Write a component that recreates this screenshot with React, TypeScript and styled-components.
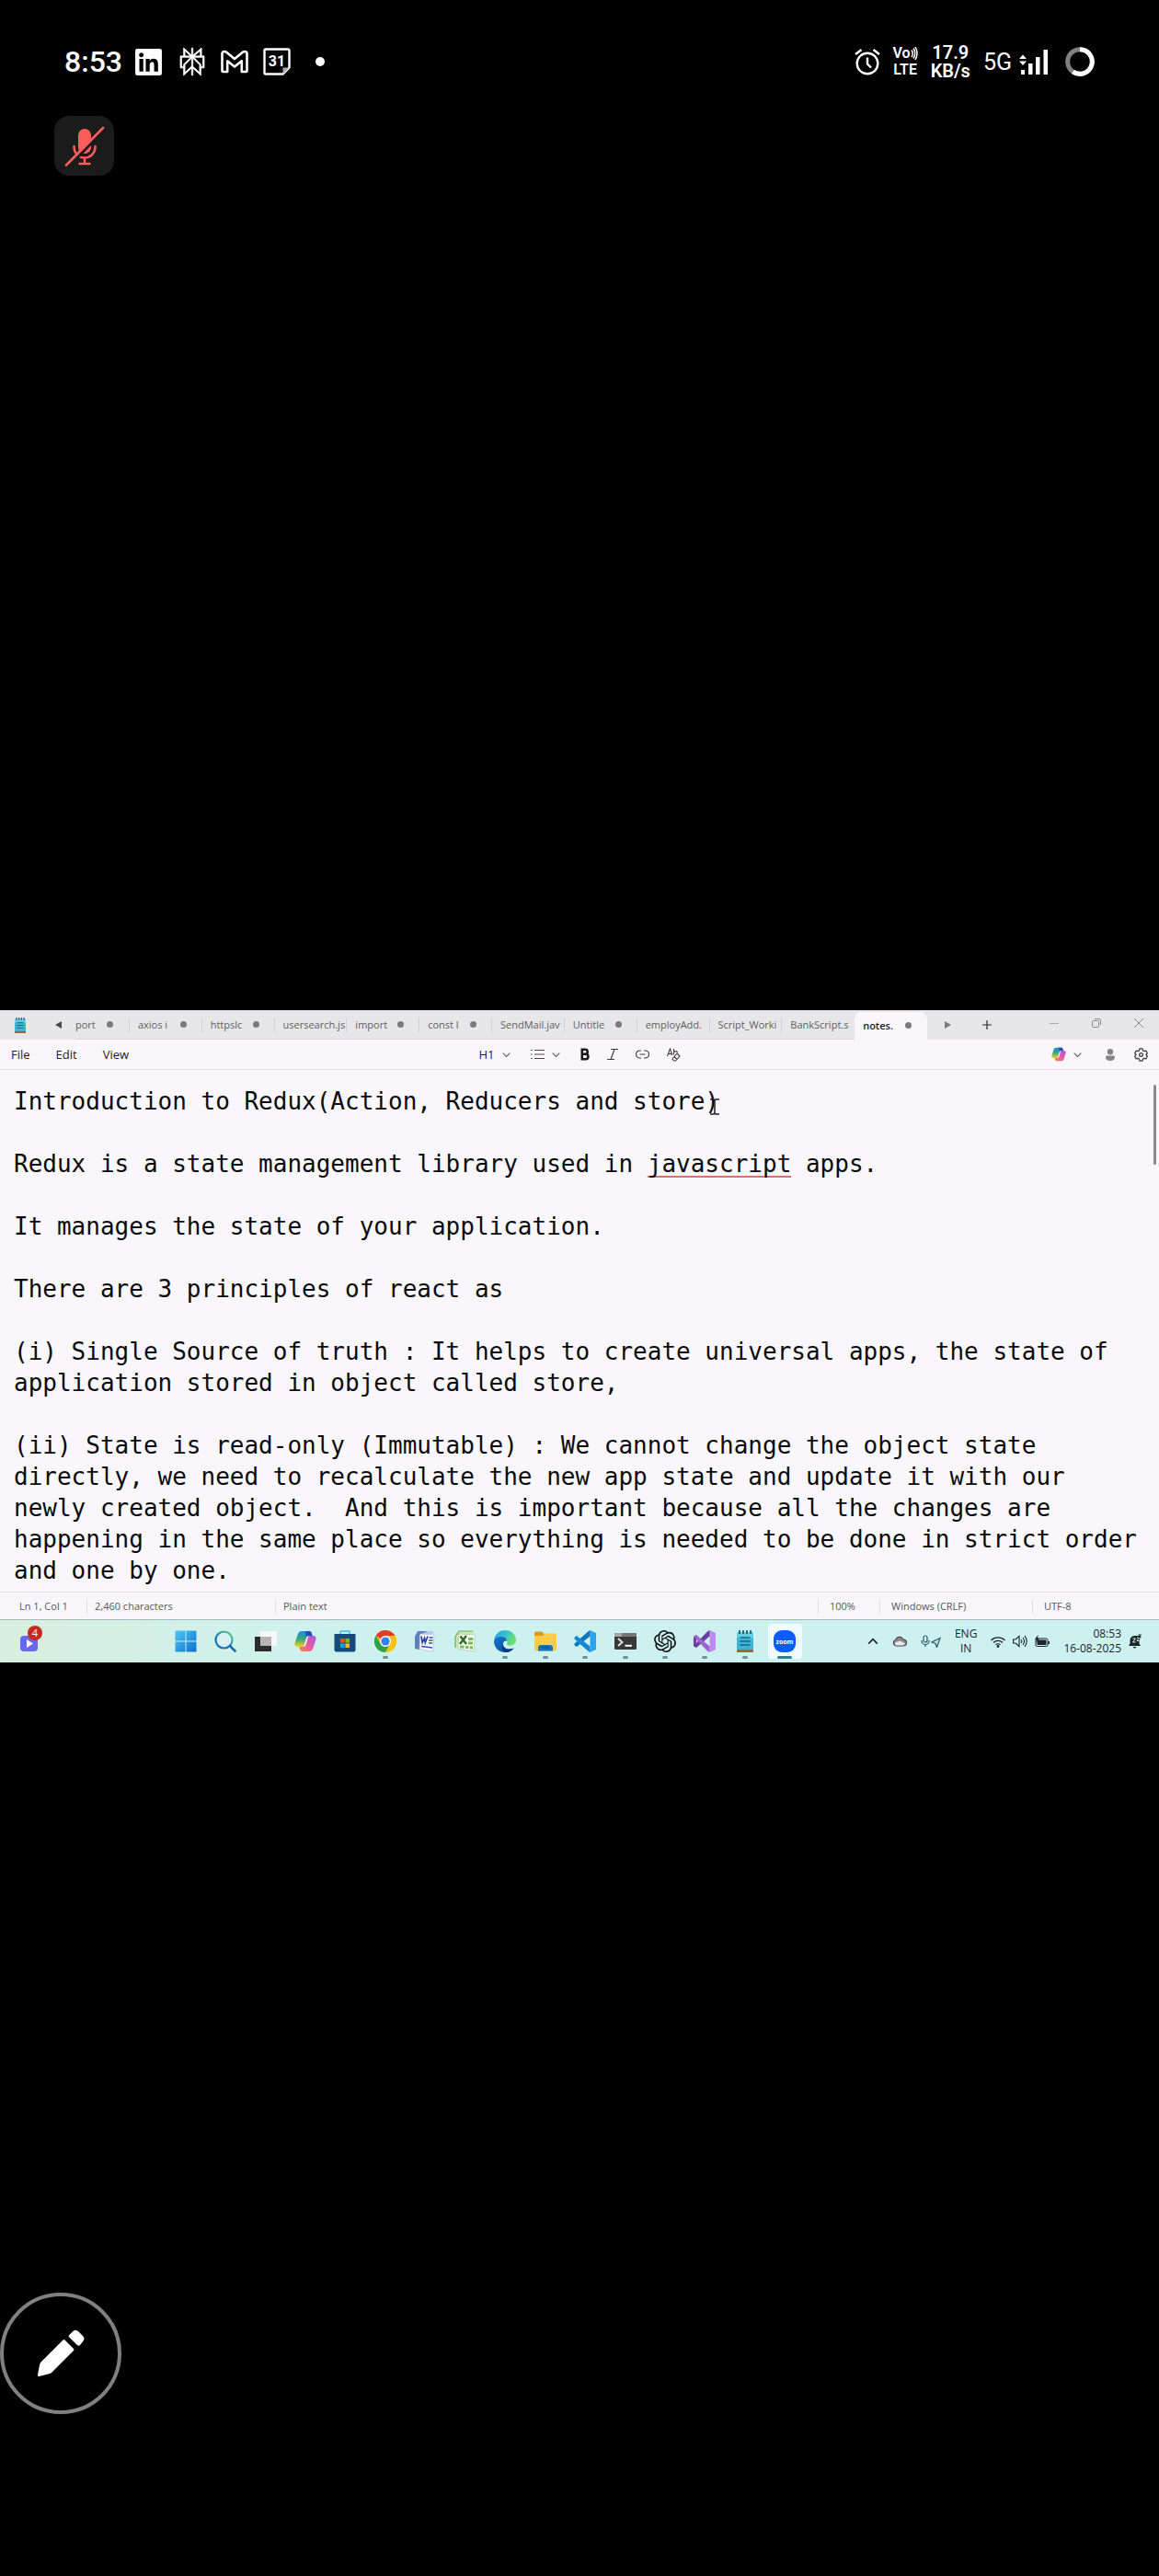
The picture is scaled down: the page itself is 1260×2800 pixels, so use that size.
import React from "react";
import styled, { createGlobalStyle } from "styled-components";
import { SiOpenai, SiPerplexity } from "react-icons/si";
import { FaLinkedin } from "react-icons/fa";

const ui = `"Open Sans", "Noto Sans", sans-serif`;
const phone = `Roboto, "Noto Sans", sans-serif`;

const GlobalStyle = createGlobalStyle`
  * { box-sizing: border-box; }
  body { margin: 0; background: #000; }
  button { border: 0; padding: 0; background: none; color: inherit; font: inherit; cursor: pointer; }
  svg { display: block; flex: none; }
`;

const Page = styled.main`
  display: flex;
  flex-direction: column;
  min-height: 100vh;
  background: #000;
  font-family: ${ui};
`;

const TopArea = styled.section`
  flex: 1098 1 0;
`;

const BottomArea = styled.section`
  flex: 993 1 0;
  display: flex;
  align-items: flex-end;
`;

/* ---------- phone status bar ---------- */

const PhoneBar = styled.header`
  display: flex;
  justify-content: space-between;
  align-items: center;
  height: 126px;
  padding: 8px 70px 0;
  color: #fff;
  font-family: ${phone};
`;

const PhoneGroup = styled.div<{ $gap: number }>`
  display: flex;
  align-items: center;
  gap: ${(p) => p.$gap}px;
`;

const Time = styled.time`
  font-size: 32px;
  font-weight: 500;
`;

const AssistantMark = styled(SiPerplexity)`
  stroke: #fff;
  stroke-width: 0.6px;
  overflow: visible;
`;

const MoreDot = styled.span`
  width: 10px;
  height: 10px;
  margin-left: 11px;
  border-radius: 50%;
  background: #fff;
`;

const Stacked = styled.span<{ $size: number; $line: number }>`
  display: flex;
  flex-direction: column;
  align-items: center;
  font-size: ${(p) => p.$size}px;
  line-height: ${(p) => p.$line}px;
  font-weight: 600;
`;

const VoRow = styled.span`
  display: flex;
  align-items: center;
`;

const Network = styled.span`
  display: flex;
  align-items: center;
  gap: 8px;
  font-size: 25px;
`;

const MicButton = styled.button`
  display: grid;
  place-items: center;
  width: 65px;
  height: 65px;
  margin-left: 59px;
  border-radius: 16px;
  background: #1b1b1b;
`;

const DrawButton = styled.button`
  display: grid;
  place-items: center;
  width: 132px;
  height: 132px;
  margin-bottom: 176px;
  border: 4px solid #808080;
  border-radius: 50%;
  background: #000;
`;

/* ---------- shared desktop ---------- */

const Desktop = styled.section`
  display: flex;
  flex-direction: column;
  background: #f9f7fb;
  color: #1c1c1e;
`;

const TitleBar = styled.div`
  display: flex;
  height: 32px;
  background: #e7e7e9;
`;

const TitleStart = styled.div`
  display: flex;
  align-items: center;
  justify-content: space-between;
  width: 82px;
  padding: 0 15px 0 16px;
`;

const TabStrip = styled.div`
  display: flex;
  flex: 1;
  min-width: 0;
`;

const Tab = styled.button<{ $active?: boolean; $cut?: boolean }>`
  display: flex;
  align-items: center;
  flex: ${(p) => (p.$cut ? 59 : 79)} 1 0;
  min-width: 0;
  text-align: left;
  font-size: 11px;
  line-height: 16px;
  font-weight: ${(p) => (p.$active ? 600 : 400)};
  color: ${(p) => (p.$active ? "#1c1c1e" : "#5e5e61")};
  background: ${(p) => (p.$active ? "#f9f7fb" : "transparent")};
  border-radius: ${(p) => (p.$active ? "8px 8px 0 0" : "0")};
  border-bottom: 1px solid ${(p) => (p.$active ? "#f9f7fb" : "#d6d6d8")};
  margin-top: ${(p) => (p.$active ? 2 : 0)}px;
`;

const TabLabel = styled.span<{ $dot?: boolean; $cut?: boolean }>`
  flex: none;
  width: ${(p) => (p.$cut ? 26 : p.$dot ? 38 : 68)}px;
  margin-left: ${(p) => (p.$cut ? 0 : 9)}px;
  white-space: nowrap;
`;

const Unsaved = styled.span`
  width: 7px;
  height: 7px;
  margin-left: 8px;
  border-radius: 50%;
  background: #7b7b7d;
`;

const TabLine = styled.span`
  width: 1px;
  height: 16px;
  margin-left: auto;
  background: #d2d2d4;
`;

const TitleEnd = styled.div`
  display: flex;
  align-items: center;
  justify-content: space-between;
  width: 252px;
  padding: 0 17px 0 19px;
`;

const WindowButtons = styled.div`
  display: flex;
  align-items: center;
  gap: 36px;
  padding-bottom: 4px;
`;

const AfterTabs = styled.div`
  display: flex;
  align-items: center;
  gap: 34px;
`;

const Toolbar = styled.div`
  display: grid;
  grid-template-columns: 1fr auto 1fr;
  align-items: center;
  height: 33px;
  padding: 0 12px;
  border-bottom: 1px solid #e4e3e6;
  font-size: 13px;
  line-height: 18px;
`;

const Menu = styled.nav`
  display: flex;
  gap: 28px;
`;

const Tools = styled.div<{ $gap: number }>`
  display: flex;
  align-items: center;
  justify-content: flex-end;
  gap: ${(p) => p.$gap}px;
`;

const ToolButton = styled.button`
  display: flex;
  align-items: center;
  gap: 8px;
`;

const Editor = styled.div`
  position: relative;
  padding: 17px 16px 6px 15px;
  color: #0a0a0b;
  font-family: "DejaVu Sans Mono", "Liberation Mono", monospace;
  font-size: 26px;
  line-height: 34px;
  white-space: pre-wrap;
  outline: 0;
`;

const Paragraph = styled.p`
  margin: 0 0 34px;
  &:last-of-type { margin-bottom: 0; }
`;

const Misspelt = styled.span`
  text-decoration: underline 2px #e0706f;
  text-underline-offset: 4px;
  text-decoration-skip-ink: none;
`;

const PointerAnchor = styled.span`
  position: relative;
`;

const PointerMark = styled.span`
  position: absolute;
  right: 0;
  bottom: 0;
`;

const ScrollThumb = styled.span`
  position: absolute;
  top: 16px;
  right: 3px;
  width: 3px;
  height: 87px;
  border-radius: 2px;
  background: #8b8b8d;
`;

const StatusBar = styled.footer`
  display: flex;
  align-items: center;
  height: 31px;
  border-top: 1px solid #e4e3e6;
  border-bottom: 1px solid #a5b5b8;
  color: #565659;
  font-size: 11px;
  line-height: 16px;
`;

const StatusCell = styled.span<{ $width?: number; $pad: number; $first?: boolean }>`
  flex: ${(p) => (p.$width ? `0 0 ${p.$width}px` : "1")};
  padding-left: ${(p) => p.$pad}px;
  border-left: ${(p) => (p.$first ? 0 : 1)}px solid #e0dfe2;
  white-space: nowrap;
`;

const Taskbar = styled.div`
  display: grid;
  grid-template-columns: 180px 1fr 385px;
  height: 46px;
  background: linear-gradient(90deg, #d9efdf 0, #d2f0e8 200px, #cdf1ef 420px, #cdf1f1 100%);
`;

const WidgetArea = styled.div`
  display: flex;
  align-items: center;
  padding-left: 22px;
`;

const WidgetButton = styled.button`
  position: relative;
  padding-top: 4px;
`;

const Badge = styled.span`
  position: absolute;
  top: -6px;
  right: -5px;
  width: 16px;
  height: 16px;
  border-radius: 50%;
  background: #c42b24;
  color: #fff;
  font-size: 11px;
  line-height: 16px;
`;

const Apps = styled.div`
  display: flex;
  min-width: 0;
`;

const AppButton = styled.button<{ $active?: boolean }>`
  position: relative;
  display: grid;
  place-items: center;
  flex: 1;
  height: 38px;
  margin: 4px 3px;
  border-radius: 4px;
  background: ${(p) => (p.$active ? "#effbfc" : "transparent")};
`;

const Running = styled.span<{ $active?: boolean }>`
  position: absolute;
  bottom: 0;
  left: 50%;
  transform: translateX(-50%);
  width: ${(p) => (p.$active ? 16 : 6)}px;
  height: 3px;
  border-radius: 2px;
  background: ${(p) => (p.$active ? "#2f7f88" : "#76908f")};
`;

const Tray = styled.div`
  display: flex;
  align-items: center;
  justify-content: flex-end;
  gap: 15px;
  padding-right: 19px;
  font-size: 12px;
  line-height: 16px;
  color: #1b2526;
`;

const TrayGroup = styled.button<{ $gap: number }>`
  display: flex;
  align-items: center;
  gap: ${(p) => p.$gap}px;
`;

const Lang = styled.button`
  text-align: center;
`;

const Clock = styled.span`
  text-align: right;
  white-space: nowrap;
`;

/* ---------- drawings ---------- */

const Chevron = ({ up, size = 9 }: { up?: boolean; size?: number }) => (
  <svg width={size} height={size} viewBox="0 0 10 10" fill="none" stroke={up ? "#1b2526" : "#5d5d60"} strokeWidth={up ? 1.3 : 1.2}>
    <path d={up ? "M1 7.2 5 3l4 4.2" : "M.8 3 5 7.2 9.2 3"} />
  </svg>
);

const NotepadIcon = ({ width, height }: { width: number; height: number }) => (
  <svg width={width} height={height} viewBox="0 0 18 24" preserveAspectRatio="none">
    <rect y="21" width="18" height="3" fill="#a5633a" />
    <rect y="2.5" width="18" height="18.5" rx="1" fill="#3fb4d5" />
    <rect y="2.5" width="18" height="6" rx="1" fill="#63cde4" />
    <path d="M3 0v4M7 0v4M11 0v4M15 0v4" stroke="#14566f" strokeWidth="1.7" />
    <path d="M3.500 8h11M3.500 12h11M3.500 16h11" stroke="#136a8c" strokeWidth="1.4" />
  </svg>
);

const Copilot = ({ size, id }: { size: number; id: string }) => (
  <svg width={size} height={size} viewBox="0 0 24 24">
    <defs>
      <linearGradient id={`${id}a`} x1="0" y1="0" x2="0" y2="1">
        <stop offset="0" stopColor="#1b8de0" />
        <stop offset=".5" stopColor="#35a979" />
        <stop offset="1" stopColor="#f4d21c" />
      </linearGradient>
      <linearGradient id={`${id}b`} x1="1" y1="0" x2="0" y2="1">
        <stop offset="0" stopColor="#a65be8" />
        <stop offset=".5" stopColor="#e659a8" />
        <stop offset="1" stopColor="#ff8a3c" />
      </linearGradient>
    </defs>
    <path d="M8 1h8.500c1.200 0 1.800 1 2.200 2.200L19.600 6h-3.300c-1.800 0-2.800.9-3.300 2.500L10.800 16c-.5 1.500-1.300 2-2.800 2H3.500C.8 18 0 16 .7 13.500L3.800 4.300C4.500 2.200 5.900 1 8 1z" fill={`url(#${id}a)`} />
    <path d="M12 1h4.500c1.200 0 1.800 1 2.200 2.200L19.600 6h-3.300c-1.800 0-2.800.9-3.300 2.500z" fill="#1b4fb4" />
    <path d="M16 23H8.500c-1.500 0-2.100-1.200-2.500-2.400L5.200 18H8c1.500 0 2.300-.5 2.800-2L13 8.500C13.500 7 14.500 6 16.300 6h4.200c2.700 0 3.500 2 2.800 4.500l-3.100 9.200C19.500 21.800 18.100 23 16 23z" fill={`url(#${id}b)`} />
    <path d="M10.800 16 13 8.500c.4-1.300 1.100-2.100 2.300-2.400L13 14.500c-.6 2.200-1.600 3.500-3.800 3.500z" fill="#f3f7fb" />
  </svg>
);

const Win = () => (
  <svg width="24" height="24" viewBox="0 0 24 24">
    <defs>
      <linearGradient id="win" x1="0" y1="0" x2="1" y2="1">
        <stop offset="0" stopColor="#4cc8f6" />
        <stop offset="1" stopColor="#0a70cc" />
      </linearGradient>
    </defs>
    <path d="M1 .5h10.500V11.500H.5V1zM12.500.5H23.500V11.500H12.500zM.5 12.500h11v11H.5zM12.500 12.500h11v11h-11z" fill="url(#win)" />
  </svg>
);

const Search = () => (
  <svg width="24" height="24" viewBox="0 0 24 24" fill="none">
    <defs>
      <linearGradient id="glass" x1="0" y1="1" x2="1" y2="0">
        <stop offset=".3" stopColor="#1273b8" />
        <stop offset="1" stopColor="#62d28b" />
      </linearGradient>
    </defs>
    <circle cx="10.5" cy="10.5" r="9" fill="#d8f0f4" stroke="url(#glass)" strokeWidth="2.2" />
    <path d="m17 17 5.500 5.500" stroke="#1569b0" strokeWidth="2.6" strokeLinecap="round" />
  </svg>
);

const TaskView = () => (
  <svg width="24" height="24" viewBox="0 0 24 24">
    <rect y="7" width="18" height="16" fill="#2c2c2d" />
    <rect x="6" y="1" width="18" height="16" rx="1" fill="#f7f7f7" />
    <rect x="6" y="7" width="12" height="10" fill="#b5b5b6" />
  </svg>
);

const Store = () => (
  <svg width="24" height="24" viewBox="0 0 24 24">
    <path d="M7 5V2q0-1 1-1h8q1 0 1 1v3" fill="none" stroke="#35bdf0" strokeWidth="1.6" />
    <path d="M.5 4h23v17.500a2 2 0 0 1-2 2h-19a2 2 0 0 1-2-2z" fill="#174a7c" />
    <path d="M7 9h4.600v4.600H7z" fill="#f25022" />
    <path d="M12.400 9H17v4.600h-4.600z" fill="#7fba00" />
    <path d="M7 14.400h4.600V19H7z" fill="#00a4ef" />
    <path d="M12.400 14.400H17V19h-4.600z" fill="#ffb900" />
  </svg>
);

const Chrome = () => (
  <svg width="24" height="24" viewBox="0 0 24 24">
    <circle cx="12" cy="12" r="12" fill="#fbc116" />
    <path d="M12 12 1.600 6A12 12 0 0 1 22.400 6z" fill="#e33b2e" />
    <path d="M1.600 6A12 12 0 0 0 12 24l5.200-9L12 12 6.800 15z" fill="#2da14e" />
    <path d="M12 6h10.400A12 12 0 0 1 12 24l5.200-9z" fill="#fbc116" />
    <circle cx="12" cy="12" r="6" fill="#fff" />
    <circle cx="12" cy="12" r="4.6" fill="#3b7ded" />
  </svg>
);

const WordIcon = () => (
  <svg width="24" height="24" viewBox="0 0 24 24">
    <path d="M4 1h17v3L6 6v15L1 20V7z" fill="#b9c8e8" />
    <path d="M4 1 1 7v13l5 1V5l9-4z" fill="#5f7fc0" />
    <path d="m7 4 15 1-1.500 18L6 20.500z" fill="#fcfdff" stroke="#b4bfd4" strokeWidth=".7" />
    <path d="M16.500 8h4.200M16 11h4.500M16 14h4.200M8 17.500l12 1.500" stroke="#2f55a4" strokeWidth="1.5" />
    <path d="m8 6.500 1.200 7 2.300-5 .8 5 2.700-7" fill="none" stroke="#24479a" strokeWidth="1.7" />
  </svg>
);

const ExcelIcon = () => (
  <svg width="24" height="24" viewBox="0 0 24 24">
    <path d="M4 1h17v3L6 6v14l-5-1V7z" fill="#cde6bf" />
    <path d="M1 19V7l4-6h15" fill="none" stroke="#6fae4d" strokeWidth="1.2" />
    <path d="m5 4 17.500 1L21 23 4 20z" fill="#fbfffa" stroke="#a7c69a" strokeWidth=".7" />
    <path d="M15 8h5.500v3H15zM15 12.500h5v3h-5zM6 16.500h4.500v3H6zM12 17h3.500v3H12zM16.800 17.200h3.200v3.300h-3.200z" fill="#7dba5b" />
    <path d="m6.500 6.500 6.500 8.500M13 6l-7 9" stroke="#2f6d1d" strokeWidth="2.4" />
  </svg>
);

const Edge = () => (
  <svg width="24" height="24" viewBox="0 0 24 24">
    <defs>
      <linearGradient id="edgeTop" x1="0" y1="0" x2="1" y2=".3">
        <stop offset="0" stopColor="#2b9be0" />
        <stop offset=".55" stopColor="#35c1d0" />
        <stop offset="1" stopColor="#6be06a" />
      </linearGradient>
      <linearGradient id="edgeLow" x1="0" y1="0" x2="1" y2="1">
        <stop offset="0" stopColor="#1478d0" />
        <stop offset="1" stopColor="#0d4596" />
      </linearGradient>
    </defs>
    <path d="M0 11.500C.5 5 5.500 0 12 0c7 0 12 4.800 12 10.500 0 4-3 6-6.500 6-2.500 0-4.200-1-3.300-2.300 1.500-2.400.5-6.700-4.700-6.700C5 7.500 1 9 0 11.500z" fill="url(#edgeTop)" />
    <path d="M0 12C.3 9 4 6.700 8.500 6.900c4 .2 6.300 2.800 6.100 5.600-2.100-2.300-5.100.1-4.600 3.500.6 3.800 5.500 6.300 11.700 3.200C19.500 22.500 16 24 12 24 5 24 0 18.500 0 12z" fill="url(#edgeLow)" />
    <path d="M10 16c.6 3.800 5.500 6.300 11.700 3.200C19.500 22.500 16 24 13 23.900 9 23 7.500 18.500 10 14z" fill="#12387f" />
  </svg>
);

const Folder = () => (
  <svg width="24" height="24" viewBox="0 0 24 24">
    <path d="M0 3q0-1.500 1.500-1.500H8L10.500 4v4H0z" fill="#d99b17" />
    <path d="M0 6h9l2-2.500h12q1 0 1 1v16q0 2-2 2H2q-2 0-2-2z" fill="#fccc46" />
    <path d="M4 19q0-3 3-3h10q3 0 3 3v3.500H4z" fill="#1671bd" />
    <path d="M7.500 18.800h9" stroke="#0d4a87" strokeWidth="1.2" />
  </svg>
);

const VsCode = () => (
  <svg width="24" height="24" viewBox="0 0 24 24">
    <path d="M17.500 24 24 21V3L17.500 0z" fill="#2ba4ee" />
    <path d="M17.500 0v6.500L3 18 .5 16.500v-2L16 .8z" fill="#0f78bd" />
    <path d="M17.500 24v-6.500L3 6 .5 7.500v2L16 23.200z" fill="#1489d2" />
  </svg>
);

const Terminal = () => (
  <svg width="24" height="24" viewBox="0 0 24 24">
    <rect y="3" width="24" height="18" rx="1.5" fill="#383838" />
    <path d="M0 7V4.500Q0 3 1.500 3h21Q24 3 24 4.500V7z" fill="#777" />
    <path d="M0 7V4.500Q0 3 1.500 3H8v4z" fill="#a5a5a5" />
    <path d="m4 9 4.500 4L4 17" fill="none" stroke="#ddd" strokeWidth="2" />
    <path d="M11.500 16.800H19" stroke="#fff" strokeWidth="2" />
  </svg>
);

const VisualStudio = () => (
  <svg width="24" height="24" viewBox="0 0 24 24">
    <path d="M17.500 0 24 3v18l-6.500 3z" fill="#c18af0" />
    <path d="M0 7l3-2v14l-3-2z" fill="#6a3d9e" />
    <path d="M17.500 0v6.500L3 19l-3-2L15 1.500z" fill="#6a3d9e" />
    <path d="M0 7l3-2 14.500 12.500V24L15 22.500z" fill="#9e62d4" />
  </svg>
);

const Zoom = () => (
  <svg width="24" height="24" viewBox="0 0 24 24">
    <rect width="24" height="24" rx="9" fill="#0b5cff" />
    <text x="12" y="14.5" textAnchor="middle" fontSize="7" fontWeight="700" fontFamily="Open Sans, sans-serif" fill="#fff">zoom</text>
  </svg>
);

const Pencil = () => (
  <svg width="52" height="52" viewBox="0 0 52 52" fill="#fff">
    <path d="M28.500 11.500q1-1 2 0l9.500 9.500q1 1 0 2L16.500 46.500q-1.500 1.500-3 1.700L2.500 51q-1.700.3-1.500-1.500L3 38.500q.3-1.500 1.500-3z" />
    <path d="M35.300 6 39 2.300q3-3 6.300 0L50 7q3 3 0 6.300L47 17q-1.500 1.300-3 0L35.300 8.500q-1.300-1.300 0-2.500z" />
  </svg>
);

const MutedMic = () => (
  <svg width="44" height="44" viewBox="0 0 44 44" fill="none" strokeLinecap="round">
    <rect x="15" y="3" width="14" height="27" rx="7" fill="#ff5c5c" />
    <path d="M10.500 22v1a11.500 11.500 0 0 0 23 0v-1M22 34.500V41M16.500 41h11" stroke="#ff5c5c" strokeWidth="2.4" />
    <path d="M4 45 43 4" stroke="#1b1b1b" strokeWidth="3" />
    <path d="M2 42.500 42 2" stroke="#ff5c5c" strokeWidth="2.6" />
  </svg>
);

const Gmail = () => (
  <svg width="30" height="26" viewBox="0 0 30 26" fill="none" stroke="#fff" strokeWidth="2.6" strokeLinejoin="round">
    <path d="M1.500 4.500Q1.500 2 4 2q1.300 0 2.200.8L15 10l8.800-7.200Q24.700 2 26 2q2.500 0 2.500 2.500V23q0 1-1 1h-4.700V12.300L15 18.500l-7.800-6.200V24H2.500q-1 0-1-1z" />
  </svg>
);

const Calendar = () => (
  <svg width="30" height="30" viewBox="0 0 30 30" fill="none">
    <path d="M3 1.500h24q1.500 0 1.500 1.500v18.500l-7 7H3Q1.500 28.500 1.500 27V3Q1.500 1.500 3 1.500z" stroke="#fff" strokeWidth="2.4" />
    <path d="M28.500 21.500h-7v7z" fill="#aaa" />
    <text x="15" y="20" textAnchor="middle" fontFamily="Roboto, sans-serif" fontSize="16" fontWeight="700" fill="#fff">31</text>
  </svg>
);

const Alarm = () => (
  <svg width="28" height="30" viewBox="0 0 28 30" fill="none" stroke="#fff" strokeWidth="2.4">
    <circle cx="14" cy="17" r="11.3" />
    <path d="M14 10.500v7l4 4M1 7l6.500-5M27 7l-6.500-5" />
  </svg>
);

const Signal = () => (
  <svg width="32" height="28" viewBox="0 0 32 28" fill="#fff">
    <path d="M4 6.500 8 11H0zM4 18l4-4.500H0zM2 23h4v5H2zM10 16h4.500v12H10zM18 9h4.500v19H18zM26.500 1H31v27h-4.500z" />
  </svg>
);

const Ring = () => (
  <svg width="32" height="32" viewBox="0 0 32 32" fill="none" strokeWidth="5">
    <circle cx="16" cy="16" r="13.3" stroke="#808080" />
    <path d="M16 2.700a13.300 13.300 0 1 1-7.600 24.200" stroke="#fff" />
  </svg>
);

const Waves = () => (
  <svg width="8" height="14" viewBox="0 0 8 14" fill="none" stroke="#fff" strokeWidth="1.5">
    <path d="M1 3.500q2.500 3.500 0 7.500M3 1.500q3.500 5 0 11M5 0q4 7 0 14" />
  </svg>
);

const ListIcon = () => (
  <svg width="15" height="12" viewBox="0 0 15 12" stroke="#4a4a4d" strokeWidth="1.2">
    <path d="M0 1.500h1.700M0 6h1.700M0 10.500h1.700M4 1.500h11M4 6h11M4 10.500h11" />
  </svg>
);

const BoldIcon = () => (
  <svg width="10" height="14" viewBox="0 0 10 14" fill="none" stroke="#19191b" strokeWidth="2.6">
    <path d="M1.800 1.800h3.400q2.500 0 2.500 2.500T5.200 6.800H1.800zM1.800 6.800h4q2.600 0 2.600 2.700t-2.600 2.700h-4z" />
  </svg>
);

const ItalicIcon = () => (
  <svg width="12" height="14" viewBox="0 0 12 14" fill="none" stroke="#3f3f42" strokeWidth="1.2">
    <path d="M4 1.500h8M0 12.500h8M8 1.500l-4 11" />
  </svg>
);

const LinkIcon = () => (
  <svg width="15" height="10" viewBox="0 0 15 10" fill="none" stroke="#3f3f42" strokeWidth="1.2">
    <path d="M6 1H4.500a4 4 0 0 0 0 8H6M9 1h1.500a4 4 0 0 1 0 8H9M4.500 5h6" />
  </svg>
);

const ClearFormat = () => (
  <svg width="15" height="15" viewBox="0 0 15 15" fill="none" stroke="#3f3f42" strokeWidth="1.1">
    <path d="M.5 9 3.500 1l2.500 7M1.500 6.500H5M7.500 1v6.500M7.500 4.500q3-2 4 .5M11 6l3 3-4.500 5h-2L6 12zM8 9.500l3 3" />
  </svg>
);

const Person = () => (
  <svg width="10" height="13" viewBox="0 0 10 13" fill="#858587">
    <circle cx="5" cy="3.3" r="3.2" />
    <path d="M1.500 7.500h7Q10 7.500 10 9q0 4-5 4t-5-4q0-1.500 1.500-1.500z" />
  </svg>
);

const Gear = () => (
  <svg width="15" height="15" viewBox="0 0 24 24" fill="none" stroke="#3a3a3d" strokeWidth="2">
    <path d="m9.500 1.500-.8 3.200-2 1.100L3.500 5 1 9.500 3.300 12 1 14.500 3.500 19l3.200-.8 2 1.100.8 3.200h5l.8-3.200 2-1.100 3.200.8 2.500-4.500-2.300-2.500L23 9.500 20.500 5l-3.200.8-2-1.100-.8-3.200z" strokeLinejoin="round" />
    <circle cx="12" cy="12" r="3" />
  </svg>
);

const Cloud = () => (
  <svg width="16" height="12" viewBox="0 0 16 12">
    <path d="M4 11a3.500 3.500 0 0 1-.5-6.700A4.500 4.500 0 0 1 12 4a3.500 3.500 0 0 1 .5 7z" fill="#8d8788" stroke="#39393b" />
    <path d="M4 10.500a2 2 0 0 1 0-3.500L8 5.500l4.500 2q1.500.5 1.200 1.800L12 10.500z" fill="#ece8ea" />
  </svg>
);

const TrayMic = () => (
  <svg width="10" height="14" viewBox="0 0 10 14" fill="none" stroke="#2b5a69" strokeWidth="1.2">
    <rect x="3" y="1" width="4" height="7" rx="2" />
    <path d="M1 6v.5a4 4 0 0 0 8 0V6M5 10.500V13" />
  </svg>
);

const Location = () => (
  <svg width="11" height="14" viewBox="0 0 11 14" fill="none" stroke="#2b5a69" strokeWidth="1.3">
    <path d="M10 3.500 1 8l4 1.500L6.500 13.500z" />
  </svg>
);

const Wifi = () => (
  <svg width="16" height="13" viewBox="0 0 16 13" fill="none" stroke="#1b2526" strokeWidth="1.2">
    <path d="M.5 5a10.500 10.500 0 0 1 15 0M3 7.500a7 7 0 0 1 10 0M5.500 9.800a3.500 3.500 0 0 1 5 0" />
    <circle cx="8" cy="11.5" r=".8" fill="#1b2526" />
  </svg>
);

const Volume = () => (
  <svg width="16" height="14" viewBox="0 0 16 14" fill="none" stroke="#1b2526" strokeWidth="1.1">
    <path d="M.6 5v4H3l4 3.500v-11L3 5zM9 5q1.500 2 0 4M11 3q3 4 0 8M13 1.200q4.500 5.800 0 11.600" />
  </svg>
);

const Battery = () => (
  <svg width="16" height="14" viewBox="0 0 16 14">
    <rect x="1" y="4" width="13" height="8.5" rx="1.5" fill="none" stroke="#1b2526" />
    <rect x="2.5" y="5.5" width="10" height="5.5" fill="#1b2526" />
    <path d="M14.500 7H16v3h-1.500zM3.500 0 0 5h2L1 9l4-5H3z" fill="#1b2526" />
  </svg>
);

const Bell = () => (
  <svg width="14" height="16" viewBox="0 0 14 16" fill="#1b2526">
    <path d="M6.500 2A5 5 0 0 0 1.500 7v3.500L0 13h13l-1.500-2.500V8L13 2zM4.500 14h4q-2 3-4 0z" />
    <path d="M4.500 5h3l-3 4h3M9 4h2.500L9 7.500h2.500" fill="none" stroke="#cdf1f1" />
    <path d="M10.500 1h3l-3 2.500h3" fill="none" stroke="#1b2526" />
  </svg>
);

const IBeam = () => (
  <svg width="10" height="18" viewBox="0 0 10 18" fill="none" stroke="#222" strokeWidth="1.5">
    <path d="M0 1h3q2 0 2 1.500Q5 1 7 1h3M5 2v14M0 17h3q2 0 2-1.500Q5 17 7 17h3" />
  </svg>
);

/* ---------- data ---------- */

const tabs: { label: string; dot?: boolean; cut?: boolean; active?: boolean }[] = [
  { label: "port", dot: true, cut: true },
  { label: "axios i", dot: true },
  { label: "httpslc", dot: true },
  { label: "usersearch.js" },
  { label: "import", dot: true },
  { label: "const l", dot: true },
  { label: "SendMail.jav" },
  { label: "Untitle", dot: true },
  { label: "employAdd." },
  { label: "Script_Worki" },
  { label: "BankScript.s" },
  { label: "notes.", dot: true, active: true },
];

const apps: { name: string; icon: React.ReactNode; running?: boolean; active?: boolean }[] = [
  { name: "Start", icon: <Win /> },
  { name: "Search", icon: <Search /> },
  { name: "Task view", icon: <TaskView /> },
  { name: "Copilot", icon: <Copilot size={24} id="bar" /> },
  { name: "Store", icon: <Store /> },
  { name: "Chrome", icon: <Chrome />, running: true },
  { name: "Word", icon: <WordIcon /> },
  { name: "Excel", icon: <ExcelIcon /> },
  { name: "Edge", icon: <Edge />, running: true },
  { name: "File Explorer", icon: <Folder />, running: true },
  { name: "VS Code", icon: <VsCode />, running: true },
  { name: "Terminal", icon: <Terminal />, running: true },
  { name: "ChatGPT", icon: <SiOpenai size={24} color="#0b0f10" />, running: true },
  { name: "Visual Studio", icon: <VisualStudio />, running: true },
  { name: "Notepad", icon: <NotepadIcon width={18} height={24} />, running: true },
  { name: "Zoom", icon: <Zoom />, running: true, active: true },
];

export default function App() {
  return (
    <Page>
      <GlobalStyle />
      <TopArea>
        <PhoneBar>
          <PhoneGroup $gap={12}>
            <Time>8:53</Time>
            <PhoneGroup $gap={16}>
              <FaLinkedin size={33} />
              <AssistantMark size={30} />
              <Gmail />
              <Calendar />
              <MoreDot />
            </PhoneGroup>
          </PhoneGroup>
          <PhoneGroup $gap={18}>
            <PhoneGroup $gap={14}>
              <Alarm />
              <Stacked $size={16} $line={18}>
                <VoRow>Vo<Waves /></VoRow>
                <span>LTE</span>
              </Stacked>
              <Stacked $size={20} $line={20}>
                <span>17.9</span>
                <span>KB/s</span>
              </Stacked>
              <Network>5G<Signal /></Network>
            </PhoneGroup>
            <Ring />
          </PhoneGroup>
        </PhoneBar>
        <MicButton aria-label="Unmute"><MutedMic /></MicButton>
      </TopArea>

      <Desktop>
        <TitleBar>
          <TitleStart>
            <NotepadIcon width={12} height={17} />
            <button aria-label="Scroll tabs left">
              <svg width="7" height="8" viewBox="0 0 7 8" fill="#4a4a4d"><path d="M7 0v8L0 4z" /></svg>
            </button>
          </TitleStart>
          <TabStrip>
            {tabs.map((t, i) => (
              <Tab key={i} $active={t.active} $cut={t.cut}>
                <TabLabel $dot={t.dot} $cut={t.cut}>{t.label}</TabLabel>
                {t.dot && <Unsaved />}
                {i < 10 && <TabLine />}
              </Tab>
            ))}
          </TabStrip>
          <TitleEnd>
            <AfterTabs>
              <button aria-label="Scroll tabs right">
                <svg width="7" height="8" viewBox="0 0 7 8" fill="#7b7b7d"><path d="M0 0v8l7-4z" /></svg>
              </button>
              <button aria-label="New tab">
                <svg width="10" height="10" viewBox="0 0 10 10" stroke="#2a2a2c" strokeWidth="1.2"><path d="M5 0v10M0 5h10" /></svg>
              </button>
            </AfterTabs>
            <WindowButtons>
              <button aria-label="Minimize">
                <svg width="10" height="10" viewBox="0 0 10 10" stroke="#aaa" strokeWidth="1"><path d="M0 5.500h10" /></svg>
              </button>
              <button aria-label="Restore">
                <svg width="10" height="10" viewBox="0 0 10 10" fill="none" stroke="#88888a"><rect x=".5" y="2.5" width="7" height="7" rx="1" /><path d="M3 .5h5q1.500 0 1.500 1.500v5" /></svg>
              </button>
              <button aria-label="Close">
                <svg width="10" height="10" viewBox="0 0 10 10" stroke="#88888a"><path d="m0 0 10 10M10 0 0 10" /></svg>
              </button>
            </WindowButtons>
          </TitleEnd>
        </TitleBar>

        <Toolbar>
          <Menu>
            <button>File</button>
            <button>Edit</button>
            <button>View</button>
          </Menu>
          <Tools $gap={22}>
            <ToolButton>H1<Chevron /></ToolButton>
            <ToolButton aria-label="List"><ListIcon /><Chevron /></ToolButton>
            <Tools $gap={19}>
              <ToolButton aria-label="Bold"><BoldIcon /></ToolButton>
              <ToolButton aria-label="Italic"><ItalicIcon /></ToolButton>
              <ToolButton aria-label="Link"><LinkIcon /></ToolButton>
              <ToolButton aria-label="Clear formatting"><ClearFormat /></ToolButton>
            </Tools>
          </Tools>
          <Tools $gap={26}>
            <ToolButton aria-label="Copilot"><Copilot size={16} id="tool" /><Chevron /></ToolButton>
            <Tools $gap={21}>
              <ToolButton aria-label="Account"><Person /></ToolButton>
              <ToolButton aria-label="Settings"><Gear /></ToolButton>
            </Tools>
          </Tools>
        </Toolbar>

        <Editor role="textbox" aria-multiline="true" aria-label="Document" tabIndex={0}>
          <Paragraph>
            Introduction to Redux(Action, Reducers and store<PointerAnchor>)<PointerMark><IBeam /></PointerMark></PointerAnchor>
          </Paragraph>
          <Paragraph>
            Redux is a state management library used in <Misspelt>javascript</Misspelt> apps.
          </Paragraph>
          <Paragraph>It manages the state of your application.</Paragraph>
          <Paragraph>There are 3 principles of react as</Paragraph>
          <Paragraph>
            (i) Single Source of truth : It helps to create universal apps, the state of application stored in object called store,
          </Paragraph>
          <Paragraph>
            {"(ii) State is read-only (Immutable) : We cannot change the object state directly, we need to recalculate the new app state and update it with our newly created object.  And this is important because all the changes are happening in the same place so everything is needed to be done in strict order and one by one."}
          </Paragraph>
          <ScrollThumb />
        </Editor>

        <StatusBar>
          <StatusCell $width={94} $pad={21} $first>Ln 1, Col 1</StatusCell>
          <StatusCell $width={205} $pad={8}>2,460 characters</StatusCell>
          <StatusCell $pad={8}>Plain text</StatusCell>
          <StatusCell $width={67} $pad={12}>100%</StatusCell>
          <StatusCell $width={166} $pad={12}>Windows (CRLF)</StatusCell>
          <StatusCell $width={138} $pad={12}>UTF-8</StatusCell>
        </StatusBar>

        <Taskbar>
          <WidgetArea>
            <WidgetButton aria-label="Widgets">
              <svg width="19" height="18" viewBox="0 0 19 18"><rect y="1" width="19" height="17" rx="4" fill="#6a69ee" /><path d="M7 5v9l7-4.500z" fill="#fff" /></svg>
              <Badge>4</Badge>
            </WidgetButton>
          </WidgetArea>
          <Apps>
            {apps.map((a) => (
              <AppButton key={a.name} aria-label={a.name} $active={a.active}>
                {a.icon}
                {a.running && <Running $active={a.active} />}
              </AppButton>
            ))}
          </Apps>
          <Tray>
            <TrayGroup $gap={0} aria-label="Hidden icons"><Chevron up size={12} /></TrayGroup>
            <TrayGroup $gap={0} aria-label="OneDrive"><Cloud /></TrayGroup>
            <TrayGroup $gap={1} aria-label="Microphone and location in use"><TrayMic /><Location /></TrayGroup>
            <Lang>ENG<br />IN</Lang>
            <TrayGroup $gap={8} aria-label="Network, sound, battery"><Wifi /><Volume /><Battery /></TrayGroup>
            <TrayGroup $gap={8}>
              <Clock>08:53<br />16-08-2025</Clock>
              <Bell />
            </TrayGroup>
          </Tray>
        </Taskbar>
      </Desktop>

      <BottomArea>
        <DrawButton aria-label="Annotate"><Pencil /></DrawButton>
      </BottomArea>
    </Page>
  );
}
